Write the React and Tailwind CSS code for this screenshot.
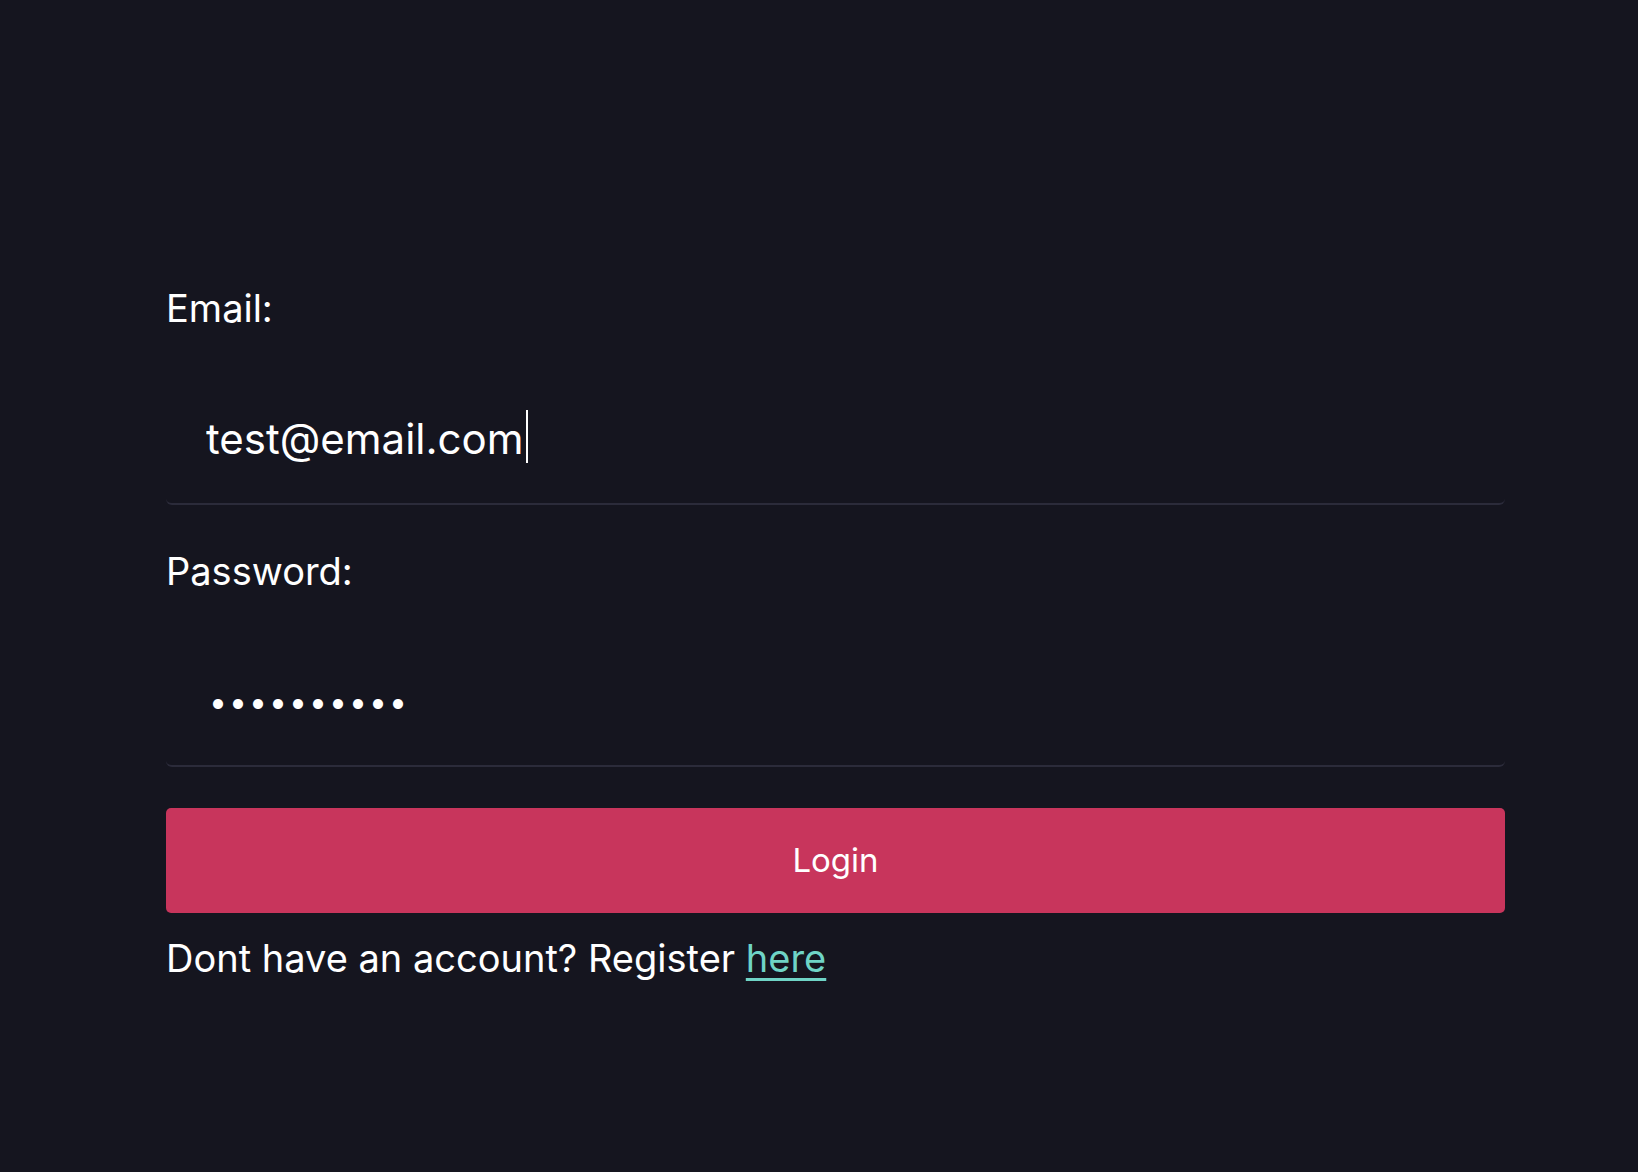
import React from "react";

export default function App() {
  return (
    <div
      className="min-h-[1172px] w-full bg-[#15151f] text-white"
      style={{ fontFamily: "Inter, 'Noto Sans', sans-serif" }}
    >
      <form
        className="ml-[166px] w-[1339px] pt-[285px] flex flex-col"
        onSubmit={(e) => e.preventDefault()}
      >
        <label htmlFor="email" className="block text-[38px] leading-[46px] font-normal">
          Email:
        </label>
        <div className="relative mt-[47px]">
          <input
            id="email"
            type="email"
            defaultValue="test@email.com"
            className="block w-full h-[127px] bg-transparent pl-[40px] pb-[4px] text-[42px] text-white border-b-2 border-[#2b2b3a] rounded-md outline-none"
          />
          <span className="absolute left-[360px] top-[32px] h-[53px] w-[2px] bg-white" />
        </div>
        <label htmlFor="password" className="block mt-[43px] text-[38px] leading-[46px] font-normal">
          Password:
        </label>
        <input
          id="password"
          type="password"
          defaultValue="0123456789"
          className="block mt-[46px] w-full h-[127px] bg-transparent pl-[43px] pb-[2px] text-[32px] text-white border-b-2 border-[#2b2b3a] rounded-md outline-none tracking-[2px]"
        />
        <button
          type="submit"
          className="mt-[41px] h-[105px] w-full rounded-[5px] bg-[#c8355c] text-[33px] text-white"
        >
          Login
        </button>
        <p className="mt-[22px] text-[38px] leading-[46px]">
          Dont have an account? Register{" "}
          <a href="#" className="text-[#6fd4c6] underline decoration-[3px] underline-offset-[6px]">
            here
          </a>
        </p>
      </form>
    </div>
  );
}
